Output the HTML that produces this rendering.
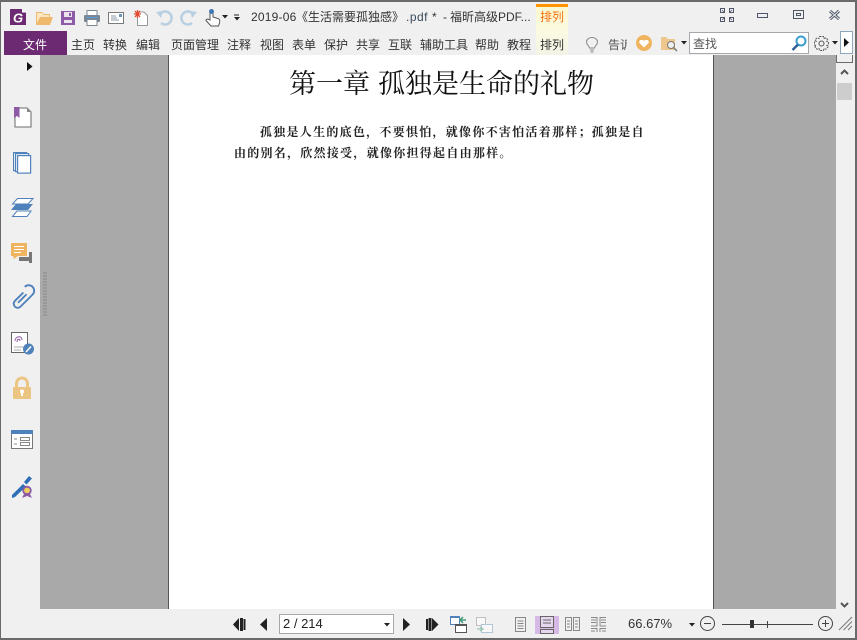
<!DOCTYPE html>
<html><head><meta charset="utf-8">
<style>
*{box-sizing:border-box}
html,body{margin:0;padding:0;background:#f0f0f0}
#w{position:relative;width:857px;height:640px;overflow:hidden;background:#f0f0f0;font-family:"Liberation Sans","Noto Sans CJK SC",sans-serif;font-size:12px;color:#333}
.a{position:absolute}
.t{position:absolute;white-space:nowrap;line-height:16px}
svg{position:absolute;overflow:visible}
.m{position:absolute;top:37px;white-space:nowrap;line-height:16px;font-size:12px;color:#333}
</style></head><body><div id="w">
<div class="a" style="left:0;top:0;width:857px;height:2px;background:#6a6a6a"></div>
<div class="a" style="left:0;top:0;width:1px;height:640px;background:#6a6a6a"></div>
<div class="a" style="right:0;top:0;width:2px;height:640px;background:#6a6a6a"></div>
<div class="a" style="left:0;top:638px;width:857px;height:2px;background:#6a6a6a"></div>

<!-- QAT icons -->
<svg style="left:10px;top:9px" width="16" height="16"><path d="M0 0H12L16 4V16H0Z" fill="#6b2a72"/><path d="M12 0L16 3.500H12Z" fill="#fff"/><text x="3" y="13.500" font-size="13" font-weight="bold" font-style="italic" fill="#fff" font-family="Liberation Sans">G</text></svg>
<svg style="left:36px;top:11px" width="17" height="15"><path d="M0 14V1H6L8 3H14V6H17L14 14Z" fill="#eeb96c"/><path d="M1 2H6L8 4H13V6H4L1 12Z" fill="#fbe6bf"/></svg>
<svg style="left:61px;top:11px" width="14" height="14"><path d="M0 0H14V14H0Z" fill="#8d5ba6"/><rect x="3" y="1" width="8" height="5" fill="#ece3f0"/><rect x="8" y="2" width="2" height="3" fill="#8d5ba6"/><rect x="3" y="9" width="8" height="3" fill="#ece3f0"/></svg>
<svg style="left:84px;top:10px" width="16" height="16"><rect x="3" y="0.500" width="10" height="5" fill="#fff" stroke="#7b8794"/><rect x="0" y="5" width="16" height="7" rx="1" fill="#7b8794"/><rect x="3" y="9.500" width="10" height="6" fill="#fff" stroke="#7b8794"/><rect x="2" y="7" width="12" height="1" fill="#5b9bd5"/></svg>
<svg style="left:108px;top:12px" width="16" height="12"><rect x=".5" y=".5" width="15" height="11" fill="#fff" stroke="#7a7a7a"/><path d="M3 4H8M3 6H9M3 8H11" stroke="#8a98a8"/><rect x="11" y="2" width="3" height="3" fill="#6f94bb"/></svg>
<svg style="left:133px;top:9px" width="15" height="17"><path d="M4.500 3H11L14.500 6.500V16.500H4.500Z" fill="#fff" stroke="#999"/><path d="M4.500 1V9M1 5H8M2 2L7 8M7 2L2 8" stroke="#e2492f" stroke-width="1.300"/></svg>
<svg style="left:156px;top:10px" width="17" height="16"><path d="M4 4A6.500 6.500 0 1 1 5 13" fill="none" stroke="#b9cfe2" stroke-width="2.500"/><path d="M0 2L7 1L5 8Z" fill="#b9cfe2"/></svg>
<svg style="left:180px;top:10px" width="17" height="16"><path d="M13 4A6.500 6.500 0 1 0 12 13" fill="none" stroke="#b9cfe2" stroke-width="2.500"/><path d="M17 2L10 1L12 8Z" fill="#b9cfe2"/></svg>
<svg style="left:205px;top:9px" width="16" height="18"><path d="M5 9V3.500C5 1.500 8 1.500 8 3.500V8L13 9.500C15 10 15 12 14.500 14L13.500 17H6L1 11.500C1 10 3 9.500 5 11Z" fill="#fff" stroke="#555"/><circle cx="6.500" cy="2.500" r="2.500" fill="#3f78b3"/></svg>
<svg style="left:222px;top:15px" width="6" height="4"><path d="M0 0H6L3 3.500Z" fill="#222"/></svg>
<svg style="left:234px;top:15px" width="6" height="6"><path d="M0 0H5" stroke="#222"/><path d="M0 2H6L3 5.500Z" fill="#222"/></svg>

<div class="t" style="left:251px;top:9px;letter-spacing:.2px">2019-06</div>
<div class="t" style="left:296px;top:9px">《</div>
<div class="t" style="left:308px;top:9px">生活需要孤独感</div>
<div class="t" style="left:392px;top:9px">》</div>
<div class="t" style="left:406px;top:9px;letter-spacing:.5px;color:#3a4a5a">.pdf</div>
<div class="t" style="left:432px;top:9px">*</div>
<div class="t" style="left:443px;top:9px">-</div>
<div class="t" style="left:450px;top:9px">福昕高级</div>
<div class="t" style="left:498px;top:9px">PDF...</div>
<div class="a" style="left:536px;top:4px;width:32px;height:51px;background:linear-gradient(#fdf9cf,#fbfae0 50%,#f4f4e6)"></div>
<div class="a" style="left:536px;top:4px;width:32px;height:3px;background:#fd9400"></div>
<div class="t" style="left:540px;top:9px;color:#f2700e">排列</div>

<!-- window controls -->
<svg style="left:720px;top:8px" width="14" height="14" fill="none" stroke="#4e5668"><rect x=".5" y=".5" width="4" height="4"/><rect x="9.500" y=".5" width="4" height="4"/><rect x=".5" y="9.500" width="4" height="4"/><rect x="9.500" y="9.500" width="4" height="4"/><path d="M2 2L4 4M12 2L10 4M2 12L4 10M12 12L10 10" stroke-width=".8"/></svg>
<svg style="left:757px;top:13px" width="11" height="5" fill="none" stroke="#4e5668"><rect x=".5" y=".5" width="10" height="4"/></svg>
<svg style="left:793px;top:10px" width="11" height="9" fill="none" stroke="#4e5668"><rect x=".5" y=".5" width="10" height="8"/><rect x="3.500" y="3.500" width="4" height="2"/></svg>
<svg style="left:829px;top:10px" width="11" height="10" fill="none"><path d="M1 1L10 9M10 1L1 9" stroke="#4e5668" stroke-width="3"/><path d="M1 1L10 9M10 1L1 9" stroke="#e8e8ea" stroke-width="1"/></svg>

<!-- menu -->
<div class="a" style="left:4px;top:31px;width:63px;height:24px;background:#6b2a72"></div>
<div class="t" style="left:23px;top:37px;color:#fff">文件</div>
<div class="m" style="left:71px">主页</div>
<div class="m" style="left:103px">转换</div>
<div class="m" style="left:136px">编辑</div>
<div class="m" style="left:171px">页面管理</div>
<div class="m" style="left:227px">注释</div>
<div class="m" style="left:260px">视图</div>
<div class="m" style="left:292px">表单</div>
<div class="m" style="left:324px">保护</div>
<div class="m" style="left:356px">共享</div>
<div class="m" style="left:388px">互联</div>
<div class="m" style="left:420px">辅助工具</div>
<div class="m" style="left:475px">帮助</div>
<div class="m" style="left:507px">教程</div>
<div class="m" style="left:540px">排列</div>

<svg style="left:586px;top:37px" width="12" height="16" fill="none" stroke="#8a8a8a"><path d="M3.500 11C3 8.500 .5 8 .5 5A5.500 4.500 0 0 1 11.500 5C11.500 8 9 8.500 8.500 11Z"/><path d="M4 13H8M4.500 15H7.500"/></svg>
<div class="a" style="left:608px;top:37px;width:19px;height:16px;overflow:hidden"><div class="t" style="left:0;top:0;color:#555;width:40px">告诉</div></div>
<svg style="left:636px;top:35px" width="16" height="16"><circle cx="8" cy="8" r="8" fill="#efb45f"/><path d="M8 12.500L3.500 8C2 5.500 6 3.500 8 6C10 3.500 14 5.500 12.500 8Z" fill="#fff"/></svg>
<svg style="left:661px;top:36px" width="17" height="15"><path d="M0 14V1H5L7 3H14V14Z" fill="#eec78f"/><circle cx="10" cy="9" r="3.500" fill="#f0f0f0" stroke="#777"/><path d="M12.500 11.500L16 15" stroke="#777" stroke-width="1.500"/></svg>
<svg style="left:681px;top:41px" width="6" height="4"><path d="M0 0H6L3 3.500Z" fill="#222"/></svg>
<div class="a" style="left:689px;top:32px;width:120px;height:22px;background:#fff;border:1px solid #a5a9ad"></div>
<div class="t" style="left:693px;top:36px;color:#555">查找</div>
<svg style="left:791px;top:35px" width="16" height="16"><circle cx="10" cy="6" r="4.500" fill="#fff" stroke="#3b9dd0" stroke-width="2"/><path d="M7 9.500L1.500 15" stroke="#2f5f99" stroke-width="2.500"/></svg>
<svg style="left:814px;top:36px" width="15" height="15" fill="none" stroke="#555"><path d="M5.500 .5H9.500L10 2.500L12 1.800L14 4L12.800 5.500L14.500 6V9L12.800 9.500L14 11L12 13.200L10 12.500L9.500 14.500H5.500L5 12.500L3 13.200L1 11L2.200 9.500L.5 9V6L2.200 5.500L1 4L3 1.800L5 2.500Z" stroke-dasharray="2 1"/><circle cx="7.500" cy="7.500" r="2.500"/></svg>
<svg style="left:832px;top:41px" width="6" height="4"><path d="M0 0H6L3 3.500Z" fill="#222"/></svg>
<div class="a" style="left:840px;top:31px;width:13px;height:23px;background:#fff;border:1px solid #8fa7bd"></div>
<svg style="left:844px;top:38px" width="5" height="9"><path d="M0 0L5 4.500L0 9Z" fill="#111"/></svg>

<!-- panes -->
<div class="a" style="left:40px;top:55px;width:796px;height:554px;background:#a9a9a9"></div>
<div class="a" style="left:168px;top:55px;width:546px;height:554px;background:#fff;border-left:1px solid #555;border-right:1px solid #555"></div>

<div class="t" style="left:289px;top:68px;font-family:'Liberation Serif','Noto Serif CJK SC',serif;font-size:27px;line-height:32px;color:#111;word-spacing:1.200px">第一章 孤独是生命的礼物</div>
<div class="t" style="left:260px;top:124px;font-family:'Noto Serif CJK SC',serif;font-size:12px;font-weight:700;letter-spacing:1.270px;color:#222">孤独是人生的底色，不要惧怕，就像你不害怕活着那样；孤独是自</div>
<div class="t" style="left:234px;top:145px;font-family:'Noto Serif CJK SC',serif;font-size:12px;font-weight:700;letter-spacing:1.270px;color:#222">由的别名，欣然接受，就像你担得起自由那样。</div>

<!-- left rail -->
<svg style="left:27px;top:62px" width="6" height="9"><path d="M0 0L5.500 4.500L0 9Z" fill="#111"/></svg>
<svg style="left:14px;top:107px" width="18" height="21"><path d="M1 1H13L17 5V20H1Z" fill="#fff" stroke="#888" stroke-width="1.300"/><path d="M13 1V5H17Z" fill="#888"/><path d="M0 0H5.500V11L3 9L0 11Z" fill="#8d5ba6"/></svg>
<svg style="left:13px;top:152px" width="18" height="22" fill="#fff" stroke="#4f82ba" stroke-width="1.200"><rect x=".6" y=".6" width="13" height="18"/><rect x="2.600" y="1.600" width="13" height="18"/><rect x="4.600" y="3.600" width="13" height="17.500"/></svg>
<svg style="left:11px;top:198px" width="23" height="20"><path d="M6.500 .5H22L17 6H1.500Z" fill="#fff" stroke="#4f82ba"/><path d="M6 13H20L16 18.500H1.500Z" fill="#fff" stroke="#4f82ba"/><path d="M5 6H22L17 12H0Z" fill="#4f82ba"/></svg>
<svg style="left:11px;top:243px" width="22" height="21"><rect x="0" y="0" width="16" height="13" fill="#efb45f"/><path d="M2 13H7L3 16Z" fill="#efb45f"/><path d="M3 3.500H13M3 6.500H13M3 9.500H10" stroke="#fff"/><path d="M18 9H21V20H18V18H8V14H18Z" fill="#777"/></svg>
<svg style="left:13px;top:288px" width="20" height="21" fill="none" stroke="#4f82ba" stroke-width="1.900"><g transform="rotate(45 10 10.500)"><path d="M6 7V19A4 4 0 0 0 14 19V2A5.500 5.500 0 0 0 3 2" transform="translate(0 -1)"/><path d="M9.500 5V17"/></g></svg>
<svg style="left:11px;top:332px" width="23" height="23"><rect x=".5" y=".5" width="16" height="20" fill="#fff" stroke="#666"/><path d="M4 9C4 4 11 3 11 8M6 10C6 7 9 6 9 9" fill="none" stroke="#8d5ba6"/><path d="M3 15H12M3 18H10" stroke="#aaa"/><circle cx="17.500" cy="17" r="5.500" fill="#4f82ba"/><path d="M15 20L20 14.500" stroke="#fff" stroke-width="1.500"/></svg>
<svg style="left:13px;top:377px" width="18" height="23"><path d="M3.500 11V6.500A5.500 5.500 0 0 1 14.500 6.500V11" fill="none" stroke="#edc583" stroke-width="3"/><rect x="0" y="10" width="18" height="12" rx="1" fill="#edc583"/><circle cx="9" cy="14.500" r="2" fill="#fff"/><rect x="8" y="15" width="2" height="4" fill="#fff"/></svg>
<svg style="left:11px;top:430px" width="22" height="19"><rect x=".5" y=".5" width="21" height="18" fill="#fff" stroke="#777"/><rect x="0" y="0" width="22" height="4" fill="#4f82ba"/><path d="M3 9H6M3 14H6" stroke="#888"/><rect x="9.500" y="7.500" width="9" height="3" fill="none" stroke="#888"/><rect x="9.500" y="12.500" width="9" height="3" fill="none" stroke="#888"/></svg>
<svg style="left:12px;top:476px" width="21" height="22"><path d="M0 19L11 8L14 10.500L3 21L0 22Z" fill="#2f6fb5"/><path d="M12 6L17 0L20 2.500L14.500 8.500Z" fill="#2f6fb5"/><circle cx="15" cy="14.500" r="3.800" fill="#f0cf5e" stroke="#8d5ba6" stroke-width="1.800"/><path d="M10 22L12.500 17H17.500L20 22L15 20Z" fill="#8d5ba6"/></svg>
<svg style="left:43px;top:272px" width="4" height="45"><path d="M1 .5V45M3 .5V45" stroke="#666" stroke-dasharray="1 2"/></svg>

<!-- scrollbar -->
<div class="a" style="left:836px;top:55px;width:17px;height:554px;background:#f0f0f0"></div>
<div class="a" style="left:836px;top:55px;width:17px;height:8px;border:1px solid #6a6a6a;border-top:0;background:#f0f0f0"></div>
<svg style="left:840px;top:69px" width="9" height="6" fill="none" stroke="#555" stroke-width="2"><path d="M1 5L4.500 1.500L8 5"/></svg>
<div class="a" style="left:837px;top:83px;width:15px;height:17px;background:#cdcdcd"></div>
<svg style="left:840px;top:602px" width="9" height="6" fill="none" stroke="#555" stroke-width="2"><path d="M1 1L4.500 4.500L8 1"/></svg>

<!-- status bar -->
<svg style="left:233px;top:618px" width="13" height="13" fill="#222"><path d="M6 0V13L0 6.500Z"/><rect x="7" y="0" width="3" height="13"/><rect x="10.500" y="1" width="2" height="11"/></svg>
<svg style="left:260px;top:618px" width="8" height="13" fill="#222"><path d="M7 0V13L0 6.500Z"/></svg>
<div class="a" style="left:279px;top:614px;width:115px;height:20px;background:#fff;border:1px solid #a5a9ad"></div>
<div class="t" style="left:283px;top:616px;font-size:13px;color:#222">2 / 214</div>
<svg style="left:384px;top:623px" width="6" height="4"><path d="M0 0H6L3 3.500Z" fill="#222"/></svg>
<svg style="left:403px;top:618px" width="8" height="13" fill="#222"><path d="M0 0V13L7 6.500Z"/></svg>
<svg style="left:426px;top:618px" width="13" height="13" fill="#222"><rect x="0" y="1" width="2" height="11"/><rect x="2.500" y="0" width="3" height="13"/><path d="M6 0V13L12.500 6.500Z"/></svg>
<svg style="left:450px;top:616px" width="17" height="17"><rect x=".5" y=".5" width="9" height="8" fill="#fff" stroke="#4f82ba"/><rect x="0" y="0" width="10" height="2" fill="#4f82ba"/><rect x="5.500" y="8.500" width="11" height="8" fill="#fff" stroke="#555"/><rect x="5" y="8" width="12" height="2" fill="#555"/><path d="M16 4H10M13 1L10 4L13 7" fill="none" stroke="#3f9a7a" stroke-width="1.500"/></svg>
<svg style="left:476px;top:617px" width="17" height="16" opacity=".55"><rect x=".5" y=".5" width="9" height="8" fill="#fff" stroke="#999"/><rect x="5.500" y="7.500" width="11" height="8" fill="#fff" stroke="#7fa6c8"/><path d="M1 12H6M4 10L7 12L4 14" fill="none" stroke="#5aa58a" stroke-width="1.300"/></svg>
<svg style="left:515px;top:617px" width="11" height="15" fill="none" stroke="#888"><rect x=".5" y=".5" width="10" height="14"/><path d="M2.500 4H8.500M2.500 6.500H8.500M2.500 9H8.500M2.500 11.500H8.500"/></svg>
<div class="a" style="left:535px;top:616px;width:24px;height:18px;background:#d7b9e6"></div>
<svg style="left:540px;top:616px" width="14" height="18" fill="none" stroke="#666"><rect x=".5" y=".5" width="13" height="11" fill="#e6d6ee"/><path d="M3 4H11M3 7H11"/><rect x=".5" y="13.500" width="13" height="4" fill="#e6d6ee"/></svg>
<svg style="left:565px;top:617px" width="15" height="15" fill="none" stroke="#888"><rect x=".5" y=".5" width="6" height="13"/><rect x="8.500" y=".5" width="6" height="13"/><path d="M2 4H5M2 7H5M2 10H5M10 4H13M10 7H13M10 10H13"/></svg>
<svg style="left:591px;top:617px" width="15" height="16" fill="none" stroke="#888"><path d="M0 .5H6V9H0M0 3H5M0 5.500H5M15 .5H9V9H15M10 3H15M10 5.500H15M0 11.500H6V15M15 11.500H9V15M0 14H4M15 14H11"/></svg>
<div class="t" style="left:628px;top:616px;font-size:13px;color:#333">66.67%</div>
<svg style="left:689px;top:623px" width="6" height="4"><path d="M0 0H6L3 3.500Z" fill="#222"/></svg>
<svg style="left:700px;top:616px" width="15" height="15" fill="none" stroke="#444"><circle cx="7.500" cy="7.500" r="7"/><path d="M4 7.500H11"/></svg>
<div class="a" style="left:722px;top:624px;width:91px;height:1px;background:#444"></div>
<div class="a" style="left:750px;top:620px;width:4px;height:8px;background:#333"></div>
<div class="a" style="left:767px;top:621px;width:1px;height:7px;background:#444"></div>
<svg style="left:818px;top:616px" width="15" height="15" fill="none" stroke="#444"><circle cx="7.500" cy="7.500" r="7"/><path d="M4 7.500H11M7.500 4V11"/></svg>
<svg style="left:839px;top:617px" width="13" height="13" fill="none" stroke="#777"><path d="M0 13L13 0M4.500 13L13 4.500M9 13L13 9"/></svg>
</div></body></html>
